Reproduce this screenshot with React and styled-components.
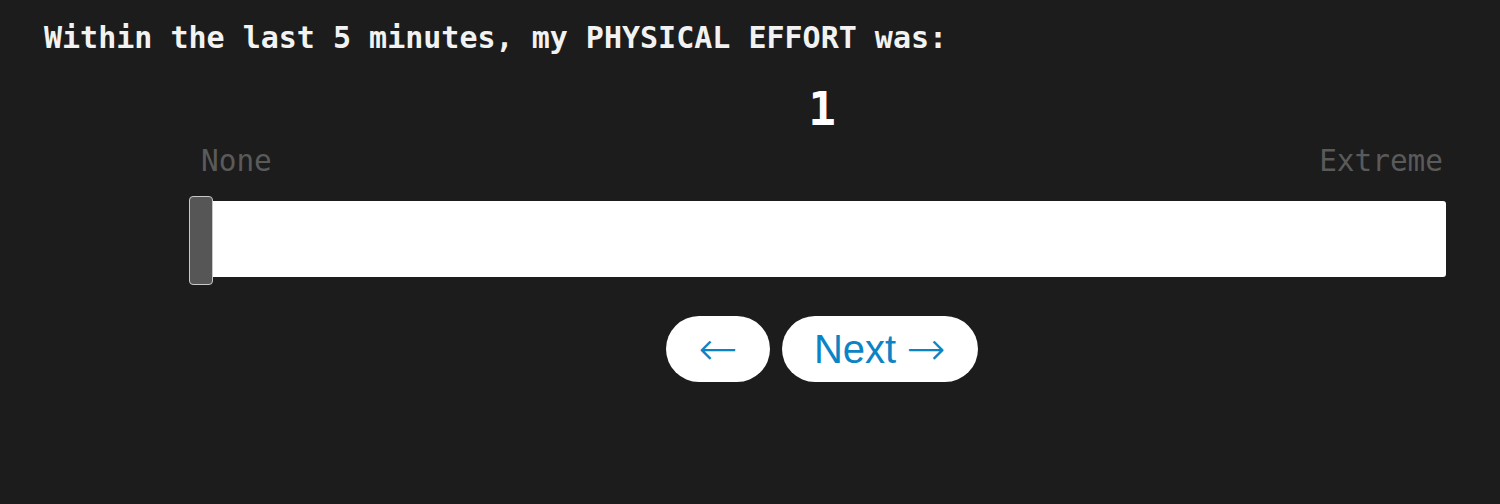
import styled, { createGlobalStyle } from "styled-components"

const GlobalStyle = createGlobalStyle`
  html, body {
    margin: 0;
    padding: 0;
    background: #1c1c1c;
  }
`

const Page = styled.div`
  width: 1500px;
  height: 504px;
  box-sizing: border-box;
  padding: 18px 44px 0 44px;
  background: #1c1c1c;
`

const Question = styled.h1`
  margin: 0;
  font-family: "DejaVu Sans Mono", monospace;
  font-weight: bold;
  font-size: 30px;
  line-height: 40px;
  color: #f2f2f2;
`

const Scale = styled.div`
  margin-left: 145px;
  width: 1257px;
  display: flex;
  flex-direction: column;
`

const Value = styled.div`
  margin-top: 26px;
  text-align: center;
  font-family: "DejaVu Sans Mono", monospace;
  font-weight: bold;
  font-size: 46px;
  line-height: 50px;
  color: #ffffff;
  padding-left: 9px;
`

const Labels = styled.div`
  display: flex;
  justify-content: space-between;
  padding: 0 3px 0 12px;
  margin-top: 7px;
`

const Label = styled.span`
  font-family: "DejaVu Sans Mono", monospace;
  font-size: 29.4px;
  line-height: 40px;
  color: #5a5a5a;
`

const Track = styled.div`
  position: relative;
  margin-top: 20px;
  height: 76px;
  background: #ffffff;
  border-radius: 3px;
`

const Thumb = styled.div`
  position: absolute;
  left: 0;
  top: -5px;
  width: 24px;
  height: 89px;
  box-sizing: border-box;
  background: #565656;
  border: 1px solid #c8c8c8;
  border-radius: 4px;
`

const Nav = styled.div`
  display: flex;
  justify-content: center;
  gap: 12px;
  margin-top: 39px;
  padding-left: 9px;
`

const NavButton = styled.button`
  height: 66px;
  padding: 0 32px;
  display: flex;
  align-items: center;
  gap: 10px;
  border: none;
  border-radius: 33px;
  background: #ffffff;
  color: #0b84c6;
  font-family: "Liberation Sans", Arial, sans-serif;
  font-size: 40px;
  line-height: 66px;
  cursor: pointer;
`

const Arrow = styled.span`
  font-family: "DejaVu Sans", sans-serif;
  font-weight: 200;
  font-size: 47px;
  line-height: 66px;
`

export default function App() {
  return (
    <>
      <GlobalStyle />
      <Page>
        <Question>Within the last 5 minutes, my PHYSICAL EFFORT was:</Question>
        <Scale>
          <Value>1</Value>
          <Labels>
            <Label>None</Label>
            <Label>Extreme</Label>
          </Labels>
          <Track>
            <Thumb />
          </Track>
          <Nav>
            <NavButton><Arrow>←</Arrow></NavButton>
            <NavButton>Next<Arrow>→</Arrow></NavButton>
          </Nav>
        </Scale>
      </Page>
    </>
  )
}
